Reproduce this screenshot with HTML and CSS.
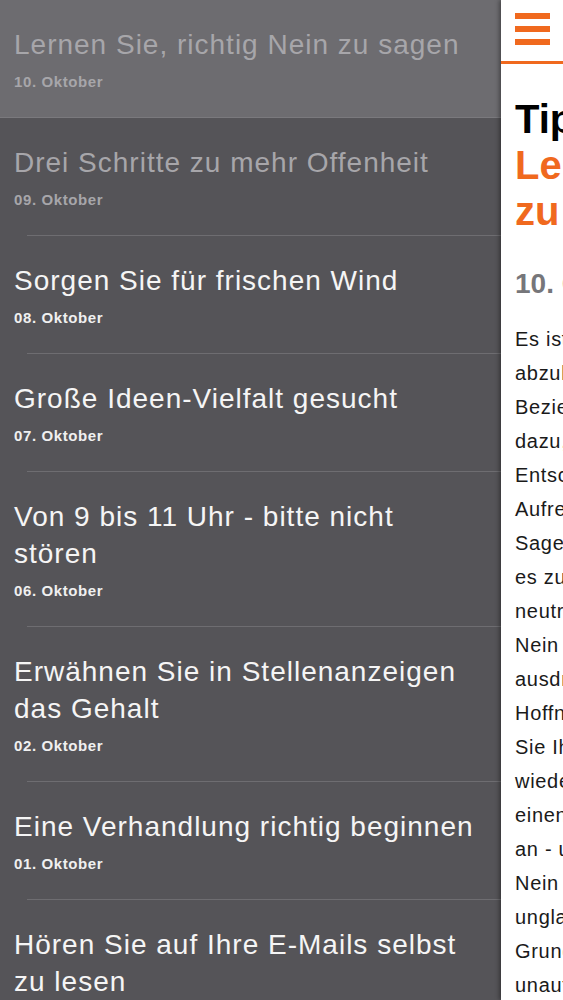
FILE: index.html
```html
<!DOCTYPE html>
<html lang="de">
<head>
	<meta charset="UTF-8">
	<title>Tipps</title>
<link rel="stylesheet" href="styles.css">
</head>
<body>
	<div class="app">
		<ul class="list">
			<li class="item read active">
				<div class="title">Lernen Sie, richtig Nein zu sagen</div>
				<div class="date">10. Oktober</div>
			</li>
			<li class="item read">
				<div class="title">Drei Schritte zu mehr Offenheit</div>
				<div class="date">09. Oktober</div>
			</li>
			<li class="item">
				<div class="title">Sorgen Sie für frischen Wind</div>
				<div class="date">08. Oktober</div>
			</li>
			<li class="item">
				<div class="title">Große Ideen-Vielfalt gesucht</div>
				<div class="date">07. Oktober</div>
			</li>
			<li class="item">
				<div class="title">Von 9 bis 11 Uhr - bitte nicht stören</div>
				<div class="date">06. Oktober</div>
			</li>
			<li class="item">
				<div class="title">Erwähnen Sie in Stellenanzeigen das Gehalt</div>
				<div class="date">02. Oktober</div>
			</li>
			<li class="item">
				<div class="title">Eine Verhandlung richtig beginnen</div>
				<div class="date">01. Oktober</div>
			</li>
			<li class="item">
				<div class="title">Hören Sie auf Ihre E-Mails selbst zu lesen</div>
				<div class="date">30. September</div>
			</li>
		</ul>

		<div class="panel">
			<div class="bar">
				<a href="javascript:;" class="menu">
					<span></span><span></span><span></span>
				</a>
			</div>
			<div class="article">
				<h1><span class="kicker">Tipp:</span><br>Lernen Sie, richtig Nein<br>zu sagen</h1>
				<div class="when">10. Oktober 2014</div>
				<p>
					Es ist nicht immer leicht, eine Bitte<br>
					abzulehnen - vor allem, wenn die<br>
					Beziehung zum Gegenüber gut ist. Es gehört<br>
					dazu, sich Zeit für eine bewusste<br>
					Entscheidung zu nehmen. Lassen Sie sich<br>
					Aufregung nicht anmerken und sagen Sie<br>
					Sagen Sie ruhig und freundlich, warum<br>
					es zu einer Absage kommt. Bleiben Sie<br>
					neutral und sachlich. Ein klares<br>
					Nein lässt sich auch höflich<br>
					ausdrücken, ohne falsche<br>
					Hoffnungen zu wecken. Bieten<br>
					Sie Ihrem Gegenüber, wenn möglich,<br>
					wieder eine Alternative an oder<br>
					einen späteren Zeitpunkt. Bieten Sie<br>
					an - und bleiben Sie dabei. Ein<br>
					Nein ohne Begründung wirkt<br>
					unglaubwürdig. Nennen Sie den<br>
					Grund, aber entschuldigen Sie sich<br>
					unaufhörlich nicht.
				</p>
			</div>
		</div>
	</div>
</body>
</html>
```

FILE: styles.css
```css
*{margin: 0; padding: 0;}
body{
	background: #555458;
	font-family: "Liberation Sans", Arial, sans-serif;
	overflow: hidden;
}
.app{
	display: flex;
	height: 1000px;
	overflow: hidden;
}

.list{
	list-style-type: none;
	width: 501px;
	flex: none;
	background: #555458;
}
.item{
	padding: 26px 20px 27px 14px;
	position: relative;
}
.item::after{
	content: "";
	position: absolute;
	left: 27px;
	right: 0;
	bottom: 0;
	height: 1px;
	background: #6e6d71;
}
.item.active{background: #6d6c70;}
.item.active::after{left: 0; background: #7a797d;}
.title{
	font-size: 28px;
	line-height: 37px;
	letter-spacing: 1px;
	color: #f5f5f5;
}
.date{
	margin-top: 10px;
	font-size: 15px;
	line-height: 18px;
	letter-spacing: 0.6px;
	font-weight: bold;
	color: #f0f0f0;
}
.read .title, .read .date{color: #a7a6aa;}

.panel{
	flex: none;
	width: 420px;
	background: #fff;
	box-shadow: -2px 0 4px rgba(0,0,0,0.35);
	position: relative;
}
.bar{
	height: 61px;
	border-bottom: 3px solid #f0691e;
	display: flex;
	align-items: center;
	padding-left: 14px;
}
.menu{
	display: flex;
	flex-direction: column;
	gap: 7px;
	margin-top: -4px;
}
.menu span{
	display: block;
	width: 35px;
	height: 6px;
	background: #f0691e;
}

.article{padding: 32px 14px 0;}
.article h1{
	font-size: 40px;
	line-height: 46px;
	font-weight: bold;
	color: #f0691e;
	white-space: nowrap;
}
.kicker{color: #000;}
.when{
	margin-top: 34px;
	font-size: 28px;
	font-weight: bold;
	color: #76767a;
}
.article p{
	margin-top: 22px;
	font-size: 20px;
	line-height: 34px;
	letter-spacing: 0.7px;
	color: #1a1a1a;
	white-space: nowrap;
}
```
